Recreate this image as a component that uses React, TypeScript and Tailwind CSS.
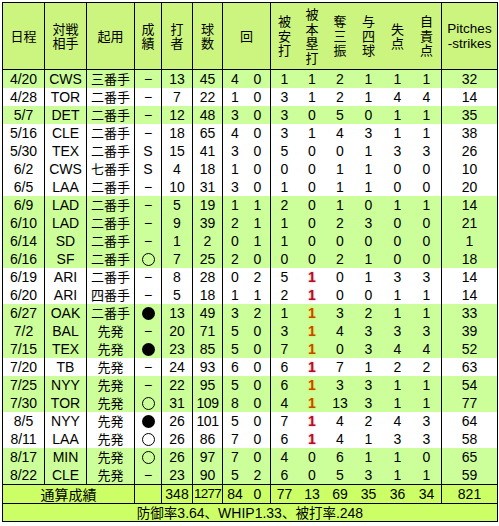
import React from "react";

type Row = [string, string, string, string, string, string, string, string, string, string, string, string, string, string, string, boolean, boolean];

const rows: Row[] = [
  ["4/20", "CWS", "三番手", "-", "13", "45", "4", "0", "1", "1", "2", "1", "1", "1", "32", true, false],
  ["4/28", "TOR", "二番手", "-", "7", "22", "1", "0", "3", "1", "2", "1", "4", "4", "14", false, false],
  ["5/7", "DET", "二番手", "-", "12", "48", "3", "0", "3", "0", "5", "0", "1", "1", "35", true, false],
  ["5/16", "CLE", "二番手", "-", "18", "65", "4", "0", "3", "1", "4", "3", "1", "1", "38", false, false],
  ["5/30", "TEX", "二番手", "S", "15", "41", "3", "0", "5", "0", "0", "1", "3", "3", "26", false, false],
  ["6/2", "CWS", "七番手", "S", "4", "18", "1", "0", "0", "0", "1", "1", "0", "0", "10", false, false],
  ["6/5", "LAA", "二番手", "-", "10", "31", "3", "0", "1", "0", "1", "1", "0", "0", "20", false, false],
  ["6/9", "LAD", "二番手", "-", "5", "19", "1", "1", "2", "0", "1", "0", "1", "1", "14", true, false],
  ["6/10", "LAD", "二番手", "-", "9", "39", "2", "1", "1", "0", "2", "3", "0", "0", "21", true, false],
  ["6/14", "SD", "二番手", "-", "1", "2", "0", "1", "1", "0", "0", "0", "0", "0", "1", true, false],
  ["6/16", "SF", "二番手", "o", "7", "25", "2", "0", "0", "0", "2", "1", "0", "0", "18", true, false],
  ["6/19", "ARI", "二番手", "-", "8", "28", "0", "2", "5", "1", "0", "1", "3", "3", "14", false, true],
  ["6/20", "ARI", "四番手", "-", "5", "18", "1", "1", "2", "1", "0", "0", "1", "1", "14", false, true],
  ["6/27", "OAK", "二番手", "x", "13", "49", "3", "2", "1", "1", "3", "2", "1", "1", "33", true, true],
  ["7/2", "BAL", "先発", "-", "20", "71", "5", "0", "3", "1", "4", "3", "3", "3", "39", true, true],
  ["7/15", "TEX", "先発", "x", "23", "85", "5", "0", "7", "1", "0", "3", "4", "4", "52", true, true],
  ["7/20", "TB", "先発", "-", "24", "93", "6", "0", "6", "1", "7", "1", "2", "2", "63", false, true],
  ["7/25", "NYY", "先発", "-", "22", "95", "5", "0", "6", "1", "3", "3", "1", "1", "54", true, true],
  ["7/30", "TOR", "先発", "o", "31", "109", "8", "0", "4", "1", "13", "3", "1", "1", "77", true, true],
  ["8/5", "NYY", "先発", "x", "26", "101", "5", "0", "7", "1", "4", "2", "4", "3", "64", false, true],
  ["8/11", "LAA", "先発", "o", "26", "86", "7", "0", "6", "1", "4", "1", "3", "3", "58", false, true],
  ["8/17", "MIN", "先発", "o", "26", "97", "7", "0", "4", "0", "6", "1", "1", "0", "65", true, false],
  ["8/22", "CLE", "先発", "-", "23", "90", "5", "2", "6", "0", "5", "3", "1", "1", "59", true, false],
];

const GRID =
  "grid grid-cols-[42px_42px_48px_27px_31px_30px_22px_26px_27px_28px_28px_29px_29px_30px_55px]";

const cjk = "font-['Noto_Sans_CJK_JP',sans-serif] text-[13px]";

function C({ children, r = false, className = "" }: { children?: React.ReactNode; r?: boolean; className?: string }) {
  return (
    <div className={`flex items-center justify-center leading-[16px] ${r ? "border-r border-black" : ""} ${className}`}>
      {children}
    </div>
  );
}

function Result({ v }: { v: string }) {
  if (v === "-") return <span>−</span>;
  if (v === "S") return <span className="text-[14px]">S</span>;
  if (v === "o") return <div className="w-[13px] h-[13px] rounded-full border border-black" />;
  return <div className="w-[13px] h-[13px] rounded-full bg-black" />;
}

function V({ lines }: { lines: string[] }) {
  return (
    <div className={`flex flex-col items-center leading-[14.5px] ${cjk}`}>
      {lines.map((l, i) => (
        <span key={i} className="h-[14.5px] leading-[14.5px]">{l}</span>
      ))}
    </div>
  );
}

export default function App() {
  return (
    <div className="bg-white w-[499px] h-[526px] pt-[2px] pl-[2px] font-['Liberation_Sans','Noto_Sans_CJK_JP',sans-serif] text-[14px] text-black">
      <div className="w-[496px] border border-black">
        {/* header */}
        <div className={`${GRID} h-[67px] bg-[#ccf57f] border-b border-black`}>
          <C r><V lines={["日程"]} /></C>
          <C r><V lines={["対戦", "相手"]} /></C>
          <C r><V lines={["起用"]} /></C>
          <C r><V lines={["成", "績"]} /></C>
          <C r><V lines={["打", "者"]} /></C>
          <C r><V lines={["球", "数"]} /></C>
          <C r className="col-span-2"><V lines={["回"]} /></C>
          <C><V lines={["被", "安", "打"]} /></C>
          <C><V lines={["被", "本", "塁", "打"]} /></C>
          <C><V lines={["奪", "三", "振"]} /></C>
          <C><V lines={["与", "四", "球"]} /></C>
          <C><V lines={["失", "点"]} /></C>
          <C r><V lines={["自", "責", "点"]} /></C>
          <C>
            <div className="flex flex-col items-center leading-[15px] text-[13.5px]">
              <span>Pitches</span>
              <span>-strikes</span>
            </div>
          </C>
        </div>
        {/* data */}
        {rows.map((row) => {
          const [d, o, role, res, bf, np, ip, ipf, h, hr, so, bb, rr, er, ps, g, red] = row;
          return (
            <div key={d} className={`${GRID} h-[18px] ${g ? "bg-[#ccff99]" : "bg-white"}`}>
              <C r>{d}</C>
              <C r>{o}</C>
              <C r className={cjk}>{role}</C>
              <C r><Result v={res} /></C>
              <C r>{bf}</C>
              <C r className={np.length > 2 ? "tracking-[-0.5px]" : ""}>{np}</C>
              <C className="pl-[2px]">{ip}</C>
              <C r>{ipf}</C>
              <C>{h}</C>
              <C>
                {red ? (
                  <span
                    className={`font-bold ${
                      g
                        ? "text-[#c44a00] [text-shadow:0_0_2px_rgba(255,200,0,0.9)]"
                        : "text-[#b01020] [text-shadow:0_0_2px_rgba(255,120,140,0.9)]"
                    }`}
                  >
                    {hr}
                  </span>
                ) : (
                  hr
                )}
              </C>
              <C>{so}</C>
              <C>{bb}</C>
              <C>{rr}</C>
              <C r>{er}</C>
              <C>{ps}</C>
            </div>
          );
        })}
        {/* total */}
        <div className={`${GRID} h-[19px] bg-[#ccff66] border-t border-black`}>
          <C r className="col-span-3 font-['Noto_Sans_CJK_JP',sans-serif] text-[14px]">通算成績</C>
          <C r />
          <C r>348</C>
          <C r className="tracking-[-0.8px] text-[13.5px]">1277</C>
          <C className="pl-[2px]">84</C>
          <C r>0</C>
          <C>77</C>
          <C>13</C>
          <C>69</C>
          <C>35</C>
          <C>36</C>
          <C r>34</C>
          <C>821</C>
        </div>
        {/* summary */}
        <div className="h-[18px] bg-[#ccff66] border-t border-black flex items-center justify-center leading-[16px]">
          <span>
            <span className="font-['Noto_Sans_CJK_JP',sans-serif] text-[13.5px]">防御率</span>3.64
            <span className="font-['Noto_Sans_CJK_JP',sans-serif] text-[13.5px]">、</span>WHIP1.33
            <span className="font-['Noto_Sans_CJK_JP',sans-serif] text-[13.5px]">、被打率</span>.248
          </span>
        </div>
      </div>
    </div>
  );
}
